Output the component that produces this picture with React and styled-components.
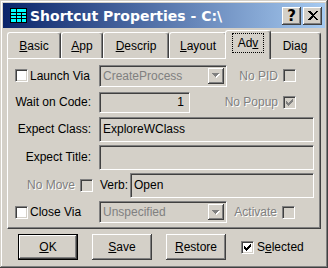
import React from 'react';
import styled, { createGlobalStyle } from 'styled-components';

const GlobalStyle = createGlobalStyle`
  html, body {
    margin: 0;
    padding: 0;
    background: #d4d0c8;
  }
  body {
    font-family: "Liberation Sans", Arial, sans-serif;
    font-size: 12px;
    color: #000;
  }
  * {
    box-sizing: border-box;
  }
`;

const Window = styled.div`
  width: 328px;
  height: 268px;
  padding: 3px;
  background: #d4d0c8;
  box-shadow: inset -1px -1px #404040, inset 1px 1px #d4d0c8,
    inset -2px -2px #808080, inset 2px 2px #ffffff;
  display: flex;
  flex-direction: column;
`;

const TitleBar = styled.div`
  height: 25px;
  flex: none;
  display: flex;
  align-items: center;
  padding: 0 3px 0 7px;
  background: linear-gradient(to right, #0a246a, #a6caf0);
  color: #fff;
`;

const TitleText = styled.span`
  flex: 1;
  margin-left: 3px;
  font-family: "DejaVu Sans", Verdana, sans-serif;
  font-weight: bold;
  font-size: 14px;
  white-space: nowrap;
`;

const CaptionButton = styled.div`
  width: 19px;
  height: 18px;
  background: #d4d0c8;
  box-shadow: inset -1px -1px #404040, inset 1px 1px #ffffff,
    inset -2px -2px #808080;
  display: flex;
  align-items: center;
  justify-content: center;
  color: #000;
  font-family: "DejaVu Sans", Verdana, sans-serif;
  font-weight: bold;
  font-size: 15px;
  & + & {
    margin-left: 2px;
  }
`;

const TabStrip = styled.div`
  height: 29px;
  margin: 2px 4px -1px 4px;
  display: flex;
  align-items: flex-end;
  position: relative;
  z-index: 1;
`;

const Tab = styled.div`
  width: ${p => (p.$active ? p.$w + 4 : p.$w)}px;
  height: ${p => (p.$active ? 29 : 26)}px;
  margin: 0 ${p => (p.$active ? -2 : 0)}px ${p => (p.$active ? 0 : 1)}px;
  padding-bottom: ${p => (p.$active ? 4 : 0)}px;
  background: #d4d0c8;
  border-top: 1px solid #ffffff;
  border-left: 1px solid #ffffff;
  border-right: 1px solid #404040;
  border-radius: 3px 3px 0 0;
  box-shadow: inset -1px 0 #808080;
  display: flex;
  align-items: center;
  justify-content: center;
  position: relative;
  z-index: ${p => (p.$active ? 2 : 1)};
  white-space: nowrap;
`;

const FocusLabel = styled.span`
  border: 1px dotted #000;
  padding: 2px 5px;
`;

const Panel = styled.div`
  height: 171px;
  flex: none;
  margin: 0 4px;
  border: 1px solid;
  border-color: #ffffff #404040 #404040 #ffffff;
  box-shadow: inset -1px -1px #808080;
  padding: 3px 6px 0 7px;
  display: flex;
  flex-direction: column;
`;

const Row = styled.div`
  height: ${p => p.$h}px;
  display: flex;
  align-items: center;
`;

const LabelCell = styled.div`
  width: ${p => p.$w || 76}px;
  margin-right: ${p => (p.$gap === undefined ? 8 : p.$gap)}px;
  flex: none;
  display: flex;
  align-items: center;
  justify-content: ${p => (p.$left ? 'flex-start' : 'flex-end')};
  gap: ${p => (p.$left ? 2 : 5)}px;
  white-space: nowrap;
`;

const SideGroup = styled.div`
  width: ${p => p.$w}px;
  flex: none;
  display: flex;
  align-items: center;
  justify-content: flex-end;
  gap: 5px;
  white-space: nowrap;
`;

const DimText = styled.span`
  color: #808080;
  text-shadow: 1px 1px 0 #ffffff;
`;

const Label = styled.span`
  margin-right: ${p => p.$mr || 0}px;
  white-space: nowrap;
`;

const Sunken = styled.div`
  border: 1px solid;
  border-color: #808080 #ffffff #ffffff #808080;
  box-shadow: inset 1px 1px #404040, inset -1px -1px #d4d0c8;
`;

const Box = styled(Sunken)`
  width: 13px;
  height: 13px;
  flex: none;
  background: ${p => (p.$disabled ? '#d4d0c8' : '#ffffff')};
  display: flex;
  align-items: center;
  justify-content: center;
`;

const TextField = styled(Sunken).attrs({ as: 'input', readOnly: true })`
  height: ${p => p.$h || 25}px;
  width: ${p => (p.$w ? `${p.$w}px` : 'auto')};
  flex: ${p => (p.$w ? 'none' : 1)};
  min-width: 0;
  margin: 0;
  padding: 0 5px 0 3px;
  background: #d4d0c8;
  font-family: "Liberation Sans", Arial, sans-serif;
  font-size: 12px;
  color: #000;
  text-align: ${p => (p.$right ? 'right' : 'left')};
  outline: none;
`;

const SelectBox = styled(Sunken)`
  width: 128px;
  height: 22px;
  flex: none;
  background: #d4d0c8;
  display: flex;
  align-items: stretch;
  padding: 2px;
`;

const SelectValue = styled.span`
  flex: 1;
  display: flex;
  align-items: center;
  padding-left: 1px;
  color: #808080;
  white-space: nowrap;
  overflow: hidden;
`;

const ArrowButton = styled.div`
  width: 16px;
  flex: none;
  background: #d4d0c8;
  box-shadow: inset -1px -1px #404040, inset 1px 1px #ffffff,
    inset -2px -2px #808080;
  display: flex;
  align-items: center;
  justify-content: center;
`;

const Footer = styled.div`
  flex: 1;
  display: flex;
  align-items: center;
  padding-left: 15px;
  gap: 14px;
`;

const PushButton = styled.div`
  width: 60px;
  height: 26px;
  background: #d4d0c8;
  border: ${p => (p.$default ? '1px solid #000' : 'none')};
  box-shadow: ${p =>
    p.$default
      ? 'inset -1px -1px #404040, inset 1px 1px #ffffff, inset -2px -2px #808080'
      : 'inset -1px -1px #404040, inset 1px 1px #ffffff, inset -2px -2px #808080, inset 2px 2px #d4d0c8'};
  display: flex;
  align-items: center;
  justify-content: center;
`;

const CheckLabel = styled.div`
  display: flex;
  align-items: center;
  gap: 3px;
  margin-left: 1px;
`;

const TableIcon = () => (
  <svg width="17" height="15" viewBox="0 0 17 15" shapeRendering="crispEdges">
    <rect x="0" y="0" width="17" height="15" fill="#000" />
    <rect x="1" y="1" width="15" height="13" fill="#00ffff" />
    <rect x="1" y="4" width="15" height="1" fill="#000" />
    <rect x="1" y="7" width="15" height="1" fill="#000" />
    <rect x="1" y="10" width="15" height="1" fill="#000" />
    <rect x="6" y="1" width="1" height="13" fill="#000" />
    <rect x="11" y="4" width="1" height="10" fill="#000" />
  </svg>
);

const CloseGlyph = () => (
  <svg width="10" height="9" viewBox="0 0 10 9" shapeRendering="crispEdges">
    <path
      fill="#000"
      d="M0 0h2l3 3 3-3h2v1L6 4.5 10 8v1H8L5 6 2 9H0V8l4-3.5L0 1z"
    />
  </svg>
);

const Check = ({ color }) => (
  <svg width="7" height="7" viewBox="0 0 7 7" shapeRendering="crispEdges">
    <path
      fill={color}
      d="M6 0h1v3h-1zM5 1h1v3h-1zM4 2h1v3h-1zM3 3h1v3h-1zM2 4h1v3h-1zM1 3h1v3h-1zM0 2h1v3h-1z"
    />
  </svg>
);

const Arrow = () => (
  <svg width="8" height="5" viewBox="0 0 8 5" shapeRendering="crispEdges">
    <path fill="#ffffff" d="M1 1h7l-3.5 4z" />
    <path fill="#808080" d="M0 0h7l-3.5 4z" />
  </svg>
);

const CheckBox = ({ checked, disabled }) => (
  <Box $disabled={disabled}>
    {checked && <Check color={disabled ? '#808080' : '#000'} />}
  </Box>
);

const Select = ({ value }) => (
  <SelectBox>
    <SelectValue>{value}</SelectValue>
    <ArrowButton>
      <Arrow />
    </ArrowButton>
  </SelectBox>
);

const tabs = [
  { key: 'basic', w: 54, label: <><u>B</u>asic</> },
  { key: 'app', w: 42, label: <><u>A</u>pp</> },
  { key: 'descrip', w: 66, label: <><u>D</u>escrip</> },
  { key: 'layout', w: 58, label: <><u>L</u>ayout</> },
  { key: 'adv', w: 42, label: <>Ad<u>v</u></>, active: true },
  { key: 'diag', w: 52, label: <>Dia<u>g</u></> },
];

export default function App() {
  return (
    <>
      <GlobalStyle />
      <Window>
        <TitleBar>
          <TableIcon />
          <TitleText>Shortcut Properties - C:\</TitleText>
          <CaptionButton>?</CaptionButton>
          <CaptionButton>
            <CloseGlyph />
          </CaptionButton>
        </TitleBar>

        <TabStrip>
          {tabs.map(t => (
            <Tab key={t.key} $w={t.w} $active={t.active}>
              {t.active ? <FocusLabel>{t.label}</FocusLabel> : t.label}
            </Tab>
          ))}
        </TabStrip>

        <Panel>
          <Row $h={27}>
            <LabelCell $left>
              <CheckBox />
              <span>Launch Via</span>
            </LabelCell>
            <Select value="CreateProcess" />
            <SideGroup $w={69}>
              <DimText>No PID</DimText>
              <CheckBox disabled />
            </SideGroup>
          </Row>

          <Row $h={26}>
            <LabelCell>Wait on Code:</LabelCell>
            <TextField $w={91} $h={21} $right value="1" />
            <SideGroup $w={106}>
              <DimText>No Popup</DimText>
              <CheckBox disabled checked />
            </SideGroup>
          </Row>

          <Row $h={28}>
            <LabelCell>Expect Class:</LabelCell>
            <TextField value="ExploreWClass" />
          </Row>

          <Row $h={28}>
            <LabelCell>Expect Title:</LabelCell>
            <TextField value="" />
          </Row>

          <Row $h={28}>
            <LabelCell $w={78} $gap={7}>
              <DimText>No Move</DimText>
              <CheckBox disabled />
            </LabelCell>
            <Label $mr={2}>Verb:</Label>
            <TextField value="Open" />
          </Row>

          <Row $h={26}>
            <LabelCell $left>
              <CheckBox />
              <span>Close Via</span>
            </LabelCell>
            <Select value="Unspecified" />
            <SideGroup $w={68}>
              <DimText>Activate</DimText>
              <CheckBox disabled />
            </SideGroup>
          </Row>
        </Panel>

        <Footer>
          <PushButton $default>
            <span><u>O</u>K</span>
          </PushButton>
          <PushButton>
            <span><u>S</u>ave</span>
          </PushButton>
          <PushButton>
            <span><u>R</u>estore</span>
          </PushButton>
          <CheckLabel>
            <CheckBox checked />
            <span>S<u>e</u>lected</span>
          </CheckLabel>
        </Footer>
      </Window>
    </>
  );
}
